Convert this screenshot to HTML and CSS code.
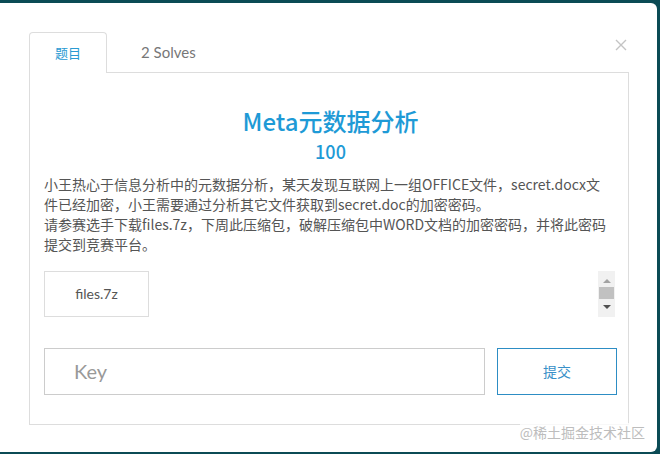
FILE: index.html
```html
<!DOCTYPE html>
<html lang="zh-CN">
<head>
<meta charset="utf-8">
<title>Meta元数据分析</title>
<link rel="stylesheet" href="styles.css">
</head>
<body>
<div class="modal">
  <button class="close" aria-label="close">
    <svg width="12" height="12" viewBox="0 0 12 12"><path d="M1 1L11 11M11 1L1 11" stroke="#c4c4c4" stroke-width="1.4" fill="none"/></svg>
  </button>
  <div class="tabs">
    <div class="tab active">题目</div>
    <div class="tab">2 Solves</div>
  </div>
  <div class="panel">
    <h1 class="title">Meta元数据分析</h1>
    <div class="score">100</div>
    <div class="desc">
      <p>小王热心于信息分析中的元数据分析，某天发现互联网上一组OFFICE文件，secret.docx文<br>件已经加密，小王需要通过分析其它文件获取到secret.doc的加密密码。</p>
      <p>请参赛选手下载files.7z，下周此压缩包，破解压缩包中WORD文档的加密密码，并将此密码提交到竞赛平台。</p>
    </div>
    <div class="files">
      <div class="file-btn">files.7z</div>
      <div class="scrollbar">
        <span class="arrow up"></span>
        <span class="thumb"></span>
        <span class="arrow down"></span>
      </div>
    </div>
    <div class="submit-row">
      <div class="key-input">Key</div>
      <div class="submit-btn">提交</div>
    </div>
  </div>
  <div class="watermark">@稀土掘金技术社区</div>
</div>
</body>
</html>
```
FILE: styles.css
```css
html, body {
  margin: 0;
  padding: 0;
}
body {
  background: #0b4b55;
  width: 660px;
  height: 454px;
  overflow: hidden;
  font-family: "Noto Sans CJK SC", sans-serif;
}
.modal {
  position: relative;
  box-sizing: border-box;
  margin-top: 3px;
  width: 657px;
  height: 449px;
  background: #fff;
  border-radius: 0 6px 6px 0;
  padding: 29px 0 0 29px;
}
.close {
  position: absolute;
  top: 36px;
  right: 30px;
  border: 0;
  background: none;
  padding: 0;
  width: 12px;
  height: 12px;
  display: block;
}
.close svg { display: block; }
.tabs {
  display: flex;
  height: 40px;
  position: relative;
  z-index: 1;
}
.tab {
  box-sizing: border-box;
  height: 41px;
  line-height: 40px;
  font-size: 15px;
  color: #777;
  font-family: "Lato", "Noto Sans CJK SC", sans-serif;
  padding: 0 32px 0 34px;
}
.tab.active {
  width: 78px;
  padding: 0;
  text-align: center;
  color: #2a9ad2;
  font-family: "Noto Sans CJK SC", sans-serif;
  font-size: 13px;
  background: #fff;
  border: 1px solid #ddd;
  border-bottom: 0;
  border-radius: 4px 4px 0 0;
}
.panel {
  box-sizing: border-box;
  width: 600px;
  height: 353px;
  border: 1px solid #ddd;
  padding: 33px 11px 0 14px;
}
.title {
  margin: 0;
  text-align: center;
  font-size: 24px;
  line-height: 30px;
  font-weight: 500;
  color: #1e9ad6;
}
.score {
  margin-top: 3px;
  text-align: center;
  font-size: 18px;
  line-height: 24px;
  font-weight: 500;
  color: #1e9ad6;
}
.desc {
  margin-top: 11px;
  font-size: 14px;
  line-height: 20px;
  color: #555;
  width: 571px;
}
.desc p { margin: 0; }
.files {
  margin-top: 17px;
  display: flex;
  justify-content: space-between;
  align-items: flex-start;
  width: 571px;
}
.file-btn {
  box-sizing: border-box;
  width: 105px;
  height: 46px;
  border: 1px solid #ddd;
  text-align: center;
  line-height: 44px;
  font-family: "Lato", sans-serif;
  font-size: 14px;
  color: #555;
}
.scrollbar {
  width: 17px;
  height: 46px;
  background: #f1f1f1;
  display: flex;
  flex-direction: column;
  align-items: center;
  padding-top: 8px;
  box-sizing: border-box;
}
.arrow {
  width: 0;
  height: 0;
  border-left: 4px solid transparent;
  border-right: 4px solid transparent;
}
.arrow.up { border-bottom: 4px solid #a3a3a3; }
.arrow.down { border-top: 4px solid #505050; }
.thumb {
  width: 15px;
  height: 12px;
  background: #c1c1c1;
  margin: 4px 0 6px;
}
.submit-row {
  margin-top: 31px;
  display: flex;
  gap: 12px;
}
.key-input {
  flex-shrink: 0;
  box-sizing: border-box;
  width: 441px;
  height: 47px;
  border: 1px solid #ccc;
  padding-left: 29px;
  line-height: 45px;
  font-family: "Lato", sans-serif;
  font-size: 20px;
  color: #999;
}
.submit-btn {
  flex-shrink: 0;
  box-sizing: border-box;
  width: 120px;
  height: 47px;
  border: 1px solid #2d8dc4;
  text-align: center;
  line-height: 45px;
  font-size: 14px;
  color: #3890c8;
}
.watermark {
  position: absolute;
  right: 12px;
  bottom: 11px;
  font-size: 14px;
  line-height: 18px;
  color: #bdbdbd;
  background: rgba(255,255,255,0.8);
}
```
